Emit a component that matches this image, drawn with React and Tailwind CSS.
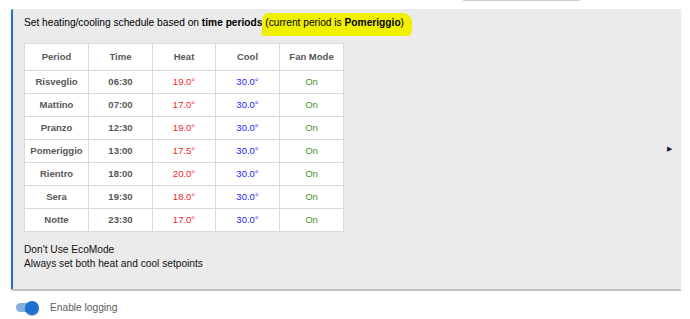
const rows = [
  ['Risveglio', '06:30', '19.0°'],
  ['Mattino', '07:00', '17.0°'],
  ['Pranzo', '12:30', '19.0°'],
  ['Pomeriggio', '13:00', '17.5°'],
  ['Rientro', '18:00', '20.0°'],
  ['Sera', '19:30', '18.0°'],
  ['Notte', '23:30', '17.0°'],
];

function Toggle() {
  return (
    <div className="relative w-[24px] h-[14px] flex items-center">
      <div className="w-[20px] h-[9px] rounded-full bg-[#82b1e0]" />
      <div className="absolute left-[9px] top-0 w-[14px] h-[14px] rounded-full bg-[#1b72cf] shadow-[0_1px_1px_rgba(0,0,0,0.3)]" />
    </div>
  );
}

export default function App() {
  const cell = 'border border-[#dadada] text-center';
  return (
    <div className="w-[690px] h-[319px] bg-white font-['Liberation_Sans',Arial,sans-serif] overflow-hidden">
      <div className="h-[2px] flex">
        <div className="ml-[463px] w-[117px] h-[1px] bg-[#cfcfcf]" />
      </div>
      <div className="ml-[11px] mt-[7px] w-[670px] h-[280px] bg-[#ebebeb] border-l-[2px] border-[#1f6fc6] rounded-tl-[2px] shadow-[0_2px_1px_rgba(0,0,0,0.25)] flex items-center">
        <div className="flex-1 h-full pl-[11px] pt-[7px]">
          <p className="text-[10.2px] leading-[14px] text-black">
            Set heating/cooling schedule based on <b>time periods</b>{' '}
            <span className="relative">
              <span className="absolute -left-[3px] -right-[8px] -top-[4px] -bottom-[8px] bg-[#f0f000] rounded-[6px_10px_4px_3px] -skew-x-3" />
              <span className="relative">
                (current period is <b>Pomeriggio</b>)
              </span>
            </span>
          </p>
          <table className="mt-[13px] bg-white border-collapse text-[9.5px] table-fixed">
            <thead>
              <tr className="h-[27px] text-[#575757] font-bold">
                <td className={`${cell} w-[64px]`}>Period</td>
                <td className={`${cell} w-[64px]`}>Time</td>
                <td className={`${cell} w-[63px]`}>Heat</td>
                <td className={`${cell} w-[64px]`}>Cool</td>
                <td className={`${cell} w-[64px]`}>Fan Mode</td>
              </tr>
            </thead>
            <tbody>
              {rows.map(([p, t, h]) => (
                <tr key={p} className="h-[23px]">
                  <td className={`${cell} font-bold text-[#575757]`}>{p}</td>
                  <td className={`${cell} font-bold text-[#575757]`}>{t}</td>
                  <td className={`${cell} text-[#f52424]`}>{h}</td>
                  <td className={`${cell} text-[#2323f0]`}>30.0°</td>
                  <td className={`${cell} text-[#3f962c]`}>On</td>
                </tr>
              ))}
            </tbody>
          </table>
          <div className="mt-[11px] text-[10.2px] leading-[13.5px] text-[#111]">
            <div>Don't Use EcoMode</div>
            <div>Always set both heat and cool setpoints</div>
          </div>
        </div>
        <div className="pr-[9px] text-[7px] text-[#1c1c3c]">▶</div>
      </div>
      <div className="ml-[16px] mt-[11px] flex items-center gap-[10px]">
        <Toggle />
        <span className="text-[10.2px] text-[#5c5c5c]">Enable logging</span>
      </div>
    </div>
  );
}
